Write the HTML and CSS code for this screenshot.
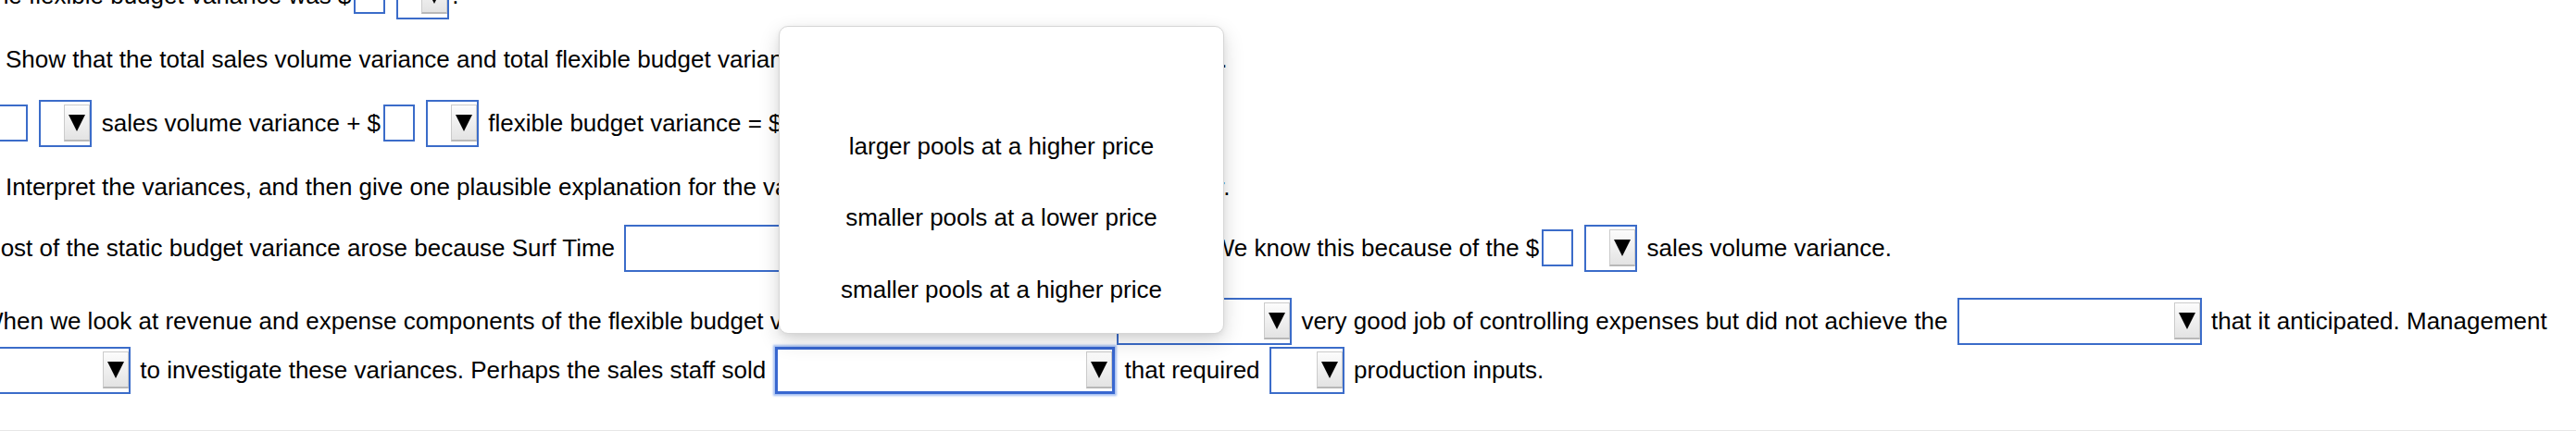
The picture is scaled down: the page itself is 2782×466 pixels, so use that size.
FILE: index.html
```html
<!DOCTYPE html>
<html lang="en">

<head>
    <meta charset="UTF-8">
    <meta name="viewport" content="width=device-width, initial-scale=1.0">
    <title>Surf Time - Variances</title>
    <link rel="stylesheet" href="styles.css">
</head>

<body>
    <div class="sheet">
        <div class="content">
            <p class="line">
                <span class="t">The flexible budget variance was $</span>
                <span class="amt"></span>
                <span class="pick sign"><span class="arrow"></span></span>
                <span class="t">.</span>
            </p>
            <p class="line ask">
                <span class="t">Show that the total sales volume variance and total flexible budget variance sum to the total static budget variance.</span>
            </p>
            <p class="line">
                <span class="t">$</span>
                <span class="amt"></span>
                <span class="pick sign"><span class="arrow"></span></span>
                <span class="t"> sales volume variance + $</span>
                <span class="amt"></span>
                <span class="pick sign"><span class="arrow"></span></span>
                <span class="t"> flexible budget variance = $</span>
                <span class="amt"></span>
                <span class="pick sign"><span class="arrow"></span></span>
                <span class="t"> static budget variance</span>
            </p>
            <p class="line ask tight">
                <span class="t">Interpret the variances, and then give one plausible explanation for the variances that they have determined earlier.</span>
            </p>
            <p class="line">
                <span class="t">Most of the static budget variance arose because Surf Time </span>
                <span class="pick reason"><span class="arrow"></span></span>
                <span class="t">. We know this because of the $</span>
                <span class="amt"></span>
                <span class="pick sign"><span class="arrow"></span></span>
                <span class="t"> sales volume variance.</span>
            </p>
            <div class="para">
                <p class="line">
                    <span class="t">When we look at revenue and expense components of the flexible budget variance, we see that Surf Time </span>
                    <span class="pick did"><span class="arrow"></span></span>
                    <span class="t"> very good job of controlling expenses but did not achieve the </span>
                    <span class="pick goal"><span class="arrow"></span></span>
                    <span class="t"> that it anticipated. Management</span>
                </p>
                <p class="line">
                    <span class="pick need"><span class="arrow"></span></span>
                    <span class="t"> to investigate these variances. Perhaps the sales staff sold </span>
                    <span class="pick sold open"><span class="arrow"></span></span>
                    <span class="t"> that required </span>
                    <span class="pick inputs"><span class="arrow"></span></span>
                    <span class="t"> production inputs.</span>
                </p>
            </div>
        </div>

        <!-- open list of the focused select -->
        <div class="menu">
            <div class="opt"></div>
            <div class="opt">larger pools at a higher price</div>
            <div class="opt">smaller pools at a lower price</div>
            <div class="opt">smaller pools at a higher price</div>
        </div>
    </div>
</body>

</html>
```

FILE: styles.css
```css
body {
    margin: 0;
    background-color: #fff;
    font-family: "Liberation Sans", Arial, Helvetica, sans-serif;
    font-size: 26px;
    color: #000;
}

.sheet {
    position: relative;
    height: 465px;
    overflow: hidden;
    border-bottom: 1px solid #e6e6e6;
}

.content {
    margin: -31px 0 0 -21px;
}

.line {
    display: flex;
    align-items: center;
    height: 52px;
    margin: 0 0 17px;
}

.ask {
    padding-left: 27px;
}

.tight {
    margin-bottom: 14px;
}

.para {
    margin-top: 27px;
}

.para .line {
    margin-bottom: 1px;
}

.t {
    white-space: pre;
}

.amt {
    box-sizing: border-box;
    width: 34px;
    height: 40px;
    margin: 0 9px 0 3px;
    border: 2px solid #3b6cc9;
    background-color: #fff;
    flex-shrink: 0;
}

.pick {
    box-sizing: border-box;
    display: flex;
    align-items: center;
    justify-content: flex-end;
    height: 51px;
    margin: 0 3px;
    border: 2px solid #3b6cc9;
    background-color: #fff;
    flex-shrink: 0;
}

.arrow {
    box-sizing: border-box;
    display: flex;
    align-items: center;
    justify-content: center;
    width: 28px;
    height: 40px;
    border: 1px solid #cbcbcb;
    border-bottom: 2px solid #b8b8b8;
    background: linear-gradient(#fcfcfc, #e3e3e3);
}

.arrow::after {
    content: "";
    border-left: 9px solid transparent;
    border-right: 9px solid transparent;
    border-top: 18px solid #000;
}

.sign {
    width: 57px;
}

.reason {
    width: 617px;
}

.did {
    width: 189px;
}

.goal {
    width: 264px;
}

.need {
    width: 159px;
}

.sold {
    width: 367px;
}

.inputs {
    width: 81px;
}

.open {
    border: 3px solid #3867d0;
    box-shadow: 0 0 2px 2px rgba(92, 140, 230, 0.55);
}

.menu {
    position: absolute;
    left: 841px;
    top: 28px;
    box-sizing: border-box;
    width: 481px;
    height: 333px;
    padding-top: 13px;
    border: 1px solid #d6d6d6;
    border-radius: 10px;
    background-color: #fff;
    box-shadow: 0 8px 22px rgba(0, 0, 0, 0.16), 0 2px 6px rgba(0, 0, 0, 0.06);
}

.opt {
    display: flex;
    align-items: center;
    justify-content: center;
    height: 77.5px;
    white-space: nowrap;
}
```
